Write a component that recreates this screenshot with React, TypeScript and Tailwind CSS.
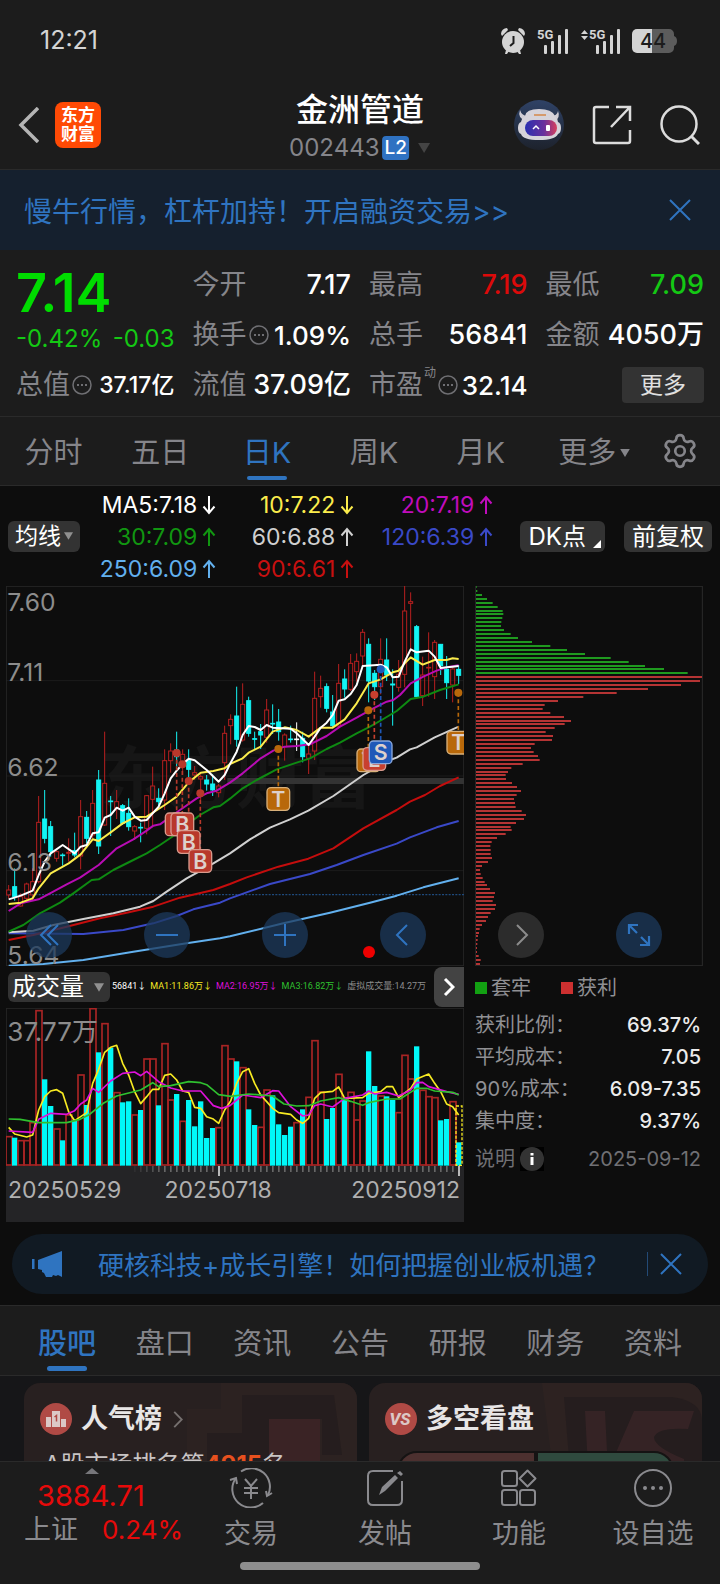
import React, { useState } from 'react';
import { Settings } from 'lucide-react';

type Candle = [string, number, number, number, number];

const STEP = 18;
const FIRST_X = 26;
const COLORS: Record<string, string> = { r: '#b81f1f', c: '#13f4f4', w: '#ffffff' };

// kind, high, body top, body bottom, low
const CANDLES: Candle[] = [
  ['r', 915, 930, 945, 955], ['c', 865, 920, 950, 962], ['r', 940, 950, 978, 980], ['r', 908, 912, 955, 965],
  ['r', 865, 905, 945, 960], ['r', 648, 727, 905, 910], ['c', 630, 717, 775, 790], ['c', 723, 740, 815, 830],
  ['r', 810, 815, 835, 845], ['c', 820, 825, 827, 857], ['r', 775, 817, 820, 845], ['c', 758, 812, 825, 832],
  ['r', 660, 710, 828, 868], ['c', 693, 712, 775, 790], ['r', 630, 670, 765, 775], ['c', 570, 600, 798, 822],
  ['r', 455, 610, 735, 738], ['c', 648, 663, 665, 768], ['r', 630, 665, 685, 717], ['c', 672, 677, 730, 735],
  ['c', 655, 700, 740, 752], ['r', 735, 740, 753, 780], ['c', 728, 742, 744, 787], ['r', 645, 647, 745, 763],
  ['r', 560, 618, 658, 742], ['c', 625, 655, 665, 678], ['r', 508, 542, 660, 690], ['r', 490, 513, 542, 578],
  ['c', 455, 510, 530, 560], ['r', 508, 523, 560, 585], ['c', 508, 542, 568, 610], ['r', 558, 578, 585, 600],
  ['r', 583, 590, 597, 660], ['c', 585, 600, 612, 632], ['c', 583, 612, 630, 648], ['r', 612, 618, 638, 652],
  ['r', 437, 460, 548, 600], ['r', 403, 418, 437, 493], ['c', 320, 408, 478, 500], ['r', 310, 373, 480, 485],
  ['c', 350, 362, 460, 470], ['c', 455, 476, 478, 507], ['c', 432, 455, 465, 507], ['r', 357, 390, 472, 488],
  ['c', 373, 430, 432, 462], ['c', 387, 426, 455, 482], ['r', 460, 465, 500, 542], ['c', 437, 477, 479, 488],
  ['w', 427, 477, 479, 513], ['c', 455, 475, 530, 547], ['r', 493, 522, 535, 582], ['r', 275, 355, 513, 540],
  ['r', 287, 325, 350, 383], ['c', 310, 320, 385, 397], ['c', 345, 396, 437, 442], ['r', 252, 310, 438, 442],
  ['c', 268, 297, 327, 353], ['r', 222, 250, 328, 333], ['r', 220, 244, 275, 305], ['r', 147, 157, 228, 258],
  ['c', 175, 193, 303, 367], ['c', 270, 280, 320, 360], ['r', 175, 238, 320, 343], ['c', 175, 240, 285, 303],
  ['c', 268, 312, 315, 437], ['r', 240, 283, 322, 335], ['r', 18, 93, 283, 322], ['r', 37, 65, 70, 215],
  ['c', 135, 140, 350, 355], ['r', 230, 285, 347, 378], ['r', 157, 262, 264, 350], ['r', 180, 187, 290, 357],
  ['c', 192, 193, 257, 285], ['c', 228, 268, 308, 357], ['r', 262, 267, 315, 367], ['c', 255, 268, 286, 312],
];

const PRICE_LINES = [
  { color: '#62b0ee', points: '26,1157 130,1152 250,1140 400,1115 560,1090 660,1075 690,1069 850,1030 990,998 1110,968 1190,947 1270,922 1376,895' },
  { color: '#3a49c8', points: '26,1060 250,1062 370,1050 460,1030 530,1008 580,988 660,968 690,955 810,912 930,882 1010,855 1090,825 1190,791 1230,772 1310,742 1376,723' },
  { color: '#c40d0d', points: '26,1080 100,1065 200,1040 300,1015 380,998 460,980 540,953 640,930 690,912 740,892 835,860 925,836 1000,805 1090,745 1190,690 1230,665 1275,645 1320,618 1376,592' },
  { color: '#d0d0d0', points: '26,1057 100,1052 160,1035 250,1017 340,1000 420,980 460,963 500,935 560,895 620,862 690,820 750,778 810,743 870,718 925,692 1000,648 1090,585 1170,540 1190,533 1230,508 1250,502 1304,472 1376,440' },
  { color: '#0e8a12', points: '26,1055 70,1035 120,1000 180,968 220,940 275,900 296,898 340,870 400,840 440,820 480,795 520,768 560,735 600,705 640,682 660,678 690,656 728,625 770,600 830,568 890,548 930,535 980,507 1020,488 1070,460 1110,440 1150,417 1190,393 1232,357 1270,350 1320,330 1376,313' },
  { color: '#b80cb4', points: '26,993 62,970 116,958 150,940 200,913 240,893 296,855 350,805 400,778 440,752 460,737 480,733 540,690 590,655 620,640 650,632 690,608 728,580 782,535 820,512 854,500 890,498 930,493 980,468 1020,440 1070,413 1120,385 1160,365 1180,360 1200,345 1232,310 1270,290 1310,272 1340,262 1376,256' },
  { color: '#fbec4c', points: '26,972 62,968 98,955 116,925 152,880 206,850 242,823 278,778 296,783 332,757 368,730 404,712 440,710 494,675 530,650 566,607 602,578 640,573 674,565 690,552 728,535 746,518 782,500 818,455 854,442 890,450 926,470 962,443 998,443 1034,418 1070,370 1106,310 1142,298 1178,277 1196,272 1214,250 1232,232 1268,254 1304,240 1340,240 1358,235 1376,237' },
  { color: '#ffffff', points: '26,958 62,947 98,932 116,885 134,845 152,820 188,795 224,820 242,800 260,795 278,760 296,757 314,713 332,705 350,683 368,692 386,683 404,710 422,722 440,720 476,680 494,640 512,595 530,572 548,552 566,536 584,541 620,570 656,605 674,585 692,548 710,515 728,465 746,438 764,441 782,450 800,435 818,443 872,446 890,460 926,495 944,470 962,443 980,428 998,405 1016,362 1034,358 1052,342 1070,315 1088,258 1142,254 1160,262 1178,292 1196,290 1214,245 1232,208 1250,217 1286,212 1304,230 1322,264 1340,262 1358,260 1376,258' },
];

const PRICE_LABELS = [
  { text: '7.60', y: 94 },
  { text: '7.11', y: 303 },
  { text: '6.62', y: 588 },
  { text: '6.13', y: 872 },
  { text: '5.64', y: 1153 },
];

const MARKERS = [
  { letter: 'B', x: 530, y: 733, dot: 519, fill: '#b8382b', edge: '#d89a8d' },
  { letter: 'B', x: 547, y: 733, dot: 553, fill: '#b8382b', edge: '#d89a8d' },
  { letter: 'B', x: 566, y: 786, dot: 603, fill: '#b8382b', edge: '#d89a8d' },
  { letter: 'B', x: 601, y: 843, dot: 640, fill: '#b8382b', edge: '#d89a8d' },
  { letter: 'T', x: 835, y: 657, dot: 507, fill: '#b8680a', edge: '#d8b07a' },
  { letter: 'T', x: 1105, y: 541, dot: 391, fill: '#b8680a', edge: '#d8b07a' },
  { letter: 'L', x: 1123, y: 537, dot: 344, fill: '#c8402f', edge: '#d89a8d' },
  { letter: 'S', x: 1142, y: 517, dot: 268, fill: '#1f58b8', edge: '#8aa8dc' },
  { letter: 'T', x: 1375, y: 488, dot: 338, fill: '#b8680a', edge: '#d8b07a' },
];

const TRAPPED = [2, 4, 18, 33, 50, 65, 80, 82, 79, 76, 75, 84, 104, 126, 168, 223, 273, 327, 404, 458, 507, 564, 635];
const PROFIT = [
  678, 672, 615, 516, 422, 322, 246, 206, 200, 223, 264, 285, 266, 236, 209, 231, 228, 176, 165, 173, 186, 191, 140, 106, 96,
  89, 90, 108, 123, 135, 122, 114, 117, 119, 137, 150, 144, 120, 104, 107, 89, 63, 47, 43, 44, 44, 48, 36, 18, 12,
  14, 20, 26, 33, 42, 57, 54, 50, 60, 57, 44, 36, 30, 18, 11, 9, 6, 5, 4, 3, 3, 8, 14, 12,
];

const VOLUMES = [
  'r530', 'c533', 'r542', 'r542', 'r488', 'r152', 'c358', 'c438', 'r507', 'c541', 'r465', 'c482', 'r345', 'c435', 'r146', 'c277',
  'r191', 'c263', 'r398', 'c427', 'c424', 'r465', 'c450', 'r297', 'r297', 'c436', 'r251', 'r420', 'c402', 'r484', 'c420', 'c499',
  'c424', 'c534', 'c504', 'r503', 'r257', 'r297', 'c304', 'r323', 'c448', 'c495', 'r502', 'r390', 'c406', 'c493', 'c525', 'c500',
  'r488', 'c448', 'r412', 'r242', 'r396', 'c477', 'c444', 'r343', 'c417', 'r397', 'r480', 'r423', 'c274', 'c378', 'r408', 'c409',
  'c420', 'r458', 'r286', 'r357', 'c259', 'r391', 'r410', 'r413', 'c481', 'c477', 'r425', 'c547',
];

const VOLUME_LINES = [
  { color: '#f7ea22', points: '26,502 44,522 80,531 98,525 116,450 134,410 152,393 170,389 188,400 206,455 224,482 260,458 278,370 296,328 314,277 332,262 350,256 368,310 386,345 404,395 422,431 440,410 458,388 476,388 494,346 512,342 530,360 548,393 566,397 584,442 602,445 620,470 638,476 656,490 674,450 692,423 710,370 728,335 746,326 764,370 782,405 800,425 818,445 836,458 872,463 890,480 908,490 926,475 944,415 962,398 998,394 1016,381 1034,415 1088,413 1106,400 1142,395 1160,380 1178,380 1196,413 1232,385 1250,357 1286,342 1304,370 1322,395 1340,432 1358,440 1376,465' },
  { color: '#de10da', points: '26,513 98,517 116,478 152,460 200,463 224,452 242,432 260,420 278,385 296,397 332,363 368,340 404,336 422,347 440,334 476,365 512,384 548,393 602,393 640,437 665,445 690,437 728,405 782,413 818,392 836,393 872,440 908,468 926,465 944,437 962,432 998,441 1034,415 1088,405 1106,393 1124,402 1160,397 1196,408 1232,390 1250,368 1268,367 1286,380 1340,395 1376,403' },
  { color: '#2fc02f', points: '26,477 60,478 116,488 200,488 240,478 266,465 310,430 350,408 422,390 458,368 476,380 512,377 566,365 602,368 620,374 656,404 692,409 746,402 818,408 852,432 890,438 926,437 962,423 1016,413 1052,424 1088,436 1106,428 1160,417 1200,417 1250,385 1280,385 1304,393 1358,397 1376,405' },
];

const AVERAGES = [
  [{ text: 'MA5:7.18', up: false, color: 'text-white' }, { text: '30:7.09', up: true, color: 'text-[#119611]' }, { text: '250:6.09', up: true, color: 'text-[#62b0ee]' }],
  [{ text: '10:7.22', up: false, color: 'text-[#fbec4c]' }, { text: '60:6.88', up: true, color: 'text-[#d0d0d0]' }, { text: '90:6.61', up: true, color: 'text-[#c81010]' }],
  [{ text: '20:7.19', up: true, color: 'text-[#c00cbc]' }, { text: '120:6.39', up: true, color: 'text-[#3a49c8]' }],
];

const Arrow = ({ up }: { up: boolean }) => (
  <svg viewBox="0 0 14 20" className={`h-5 w-[14px] ${up ? '' : 'rotate-180'}`} fill="none" stroke="currentColor" strokeWidth="2">
    <path d="M7 19V2M1.5 8.5L7 2l5.5 6.5" />
  </svg>
);

const Close = () => (
  <svg viewBox="0 0 22 22" className="h-[22px] w-[22px]" fill="none" stroke="#2f74c0" strokeWidth="2">
    <path d="M1 1l20 20M21 1L1 21" />
  </svg>
);

const Dots = () => (
  <svg viewBox="0 0 20 20" className="h-5 w-5 shrink-0" fill="none" stroke="#6f6f73" strokeWidth="1.5">
    <circle cx="10" cy="10" r="9" />
    <path d="M5 10h2M9 10h2M13 10h2" strokeWidth="2" />
  </svg>
);

const Caret = ({ className }: { className: string }) => (
  <svg viewBox="0 0 12 10" className={className} fill="currentColor">
    <path d="M0 0h12L6 10z" />
  </svg>
);

const Signal = ({ arrows }: { arrows?: boolean }) => (
  <svg viewBox="0 0 40 26" className="h-[26px] w-10 overflow-visible" fill="#d4d4d4">
    {arrows && <path d="M0 6l3.5-4L7 6zM0 8h7l-3.500 4z" />}
    <text x="8" y="11" fontSize="13" fontWeight="700" fontFamily="Roboto, sans-serif">5G</text>
    <rect x="15" y="17" width="3" height="9" rx="1" />
    <rect x="22" y="13" width="3" height="13" rx="1" />
    <rect x="29" y="7" width="3" height="19" rx="1" />
    <rect x="36" y="1" width="3" height="25" rx="1" />
  </svg>
);

const StatusBar = () => (
  <div className="flex h-20 items-center justify-between pl-10 pr-[43px] pt-[2px] text-[#d4d4d4]">
    <span className="text-[25px]">12:21</span>
    <div className="flex items-center">
      <svg viewBox="0 0 24 26" className="mr-1 h-[26px] w-6" fill="#d4d4d4">
        <circle cx="12" cy="14" r="11" />
        <path d="M0 6a6 6 0 0 1 6-6l1 2-6 6zM24 6a6 6 0 0 0-6-6l-1 2 6 6zM5 22l-1 4h2l2-3zM19 22l1 4h-2l-2-3z" />
        <path d="M12.500 8v7l-3.500 3" fill="none" stroke="#1c1c1c" strokeWidth="2" />
      </svg>
      <Signal />
      <div className="w-3" />
      <Signal arrows />
      <svg viewBox="0 0 45 24" className="ml-[11px] h-6 w-[45px]">
        <path d="M5 0h15v24H5a5 5 0 0 1-5-5V5a5 5 0 0 1 5-5z" fill="#d4d4d4" />
        <path d="M20 0h17a5 5 0 0 1 5 5v2q3 1 3 5t-3 5v2a5 5 0 0 1-5 5H20z" fill="#5c5c5c" />
        <text x="21" y="19" fontSize="20" fontWeight="500" textAnchor="middle" fill="#1c1c1c">44</text>
      </svg>
    </div>
  </div>
);

const Header = () => (
  <header className="relative flex h-[90px] items-center justify-between border-b border-[#2a2a2a] pl-[18px] pr-5">
    <div className="flex items-center gap-4">
      <button aria-label="返回">
        <svg viewBox="0 0 21 36" className="h-9 w-[21px]" fill="none" stroke="#b4b4b4" strokeWidth="3.500">
          <path d="M20 1L3 18l17 17" />
        </svg>
      </button>
      <div className="flex h-[46px] w-[46px] flex-col items-center justify-center rounded-lg bg-[#ff4a05] text-[17px] font-bold leading-[19px] text-white">
        <span>东方</span>
        <span>财富</span>
      </div>
    </div>
    <div className="absolute left-1/2 top-3 flex -translate-x-1/2 flex-col items-center">
      <h1 className="text-[32px] font-medium leading-9 text-white">金洲管道</h1>
      <div className="mt-2 flex items-center text-[24px] leading-6 text-[#85858a]">
        <span>002443</span>
        <span className="ml-[3px] rounded bg-[#2f72c2] px-[2px] text-[19px] font-medium text-white">L2</span>
        <Caret className="ml-2 h-[10px] w-[14px] text-[#444]" />
      </div>
    </div>
    <div className="flex items-center gap-7">
      <button aria-label="助手">
        <svg viewBox="0 0 50 50" className="h-[50px] w-[50px]">
          <defs>
            <linearGradient id="disc" x1="0" y1="0" x2="0" y2="1">
              <stop offset="0" stopColor="#2f4266" />
              <stop offset="1" stopColor="#1d222c" />
            </linearGradient>
            <linearGradient id="visor" x1="0" y1="0" x2="1" y2="0">
              <stop offset="0" stopColor="#2a2fb0" />
              <stop offset="0.600" stopColor="#6a2f9c" />
              <stop offset="1" stopColor="#d8405c" />
            </linearGradient>
          </defs>
          <circle cx="25" cy="25" r="25" fill="url(#disc)" />
          <path d="M6 10q-3 8 6 11l4-5q-8 1-10-6zM44 11q3 7-4 11l-5-6q8 1 9-5z" fill="#d0cdd4" />
          <path d="M11 16q1-7 14-7t16 7q3 3 3 6 3 1 3 6t-3 6q-3 6-19 6t-18-6q-3-1-3-6t3-6q1-4 4-6z" fill="#d6d3da" />
          <rect x="11" y="20" width="32" height="16" rx="8" fill="url(#visor)" />
          <path d="M19 29l3-3 3 3" fill="none" stroke="#fff" strokeWidth="1.500" />
          <rect x="32" y="25" width="4" height="6" rx="1" fill="#fff" />
          <path d="M20 15h12" stroke="#d59a6c" strokeWidth="2" />
        </svg>
      </button>
      <button aria-label="分享">
        <svg viewBox="0 0 40 40" className="h-10 w-10" fill="none" stroke="#dcdcdc" strokeWidth="2.500">
          <path d="M17 2H4Q2 2 2 4v32q0 2 2 2h32q2 0 2-2V25M24 2h14v14M38 2L19 22" />
        </svg>
      </button>
      <button aria-label="搜索">
        <svg viewBox="0 0 40 40" className="h-10 w-10" fill="none" stroke="#dcdcdc" strokeWidth="2.500">
          <circle cx="19" cy="19" r="17.500" />
          <path d="M31 31l8 8" strokeWidth="3" />
        </svg>
      </button>
    </div>
  </header>
);

interface QuoteProps {
  label: string;
  value: string;
  color?: string;
  dots?: boolean;
  sup?: string;
}

const Quote = ({ label, value, color = 'text-white', dots, sup }: QuoteProps) => (
  <div className="flex h-[50px] items-center justify-between whitespace-nowrap">
    <span className="relative flex items-center text-[27px] text-[#85858a]">
      {label}
      {sup && <span className="absolute left-[55px] top-0 text-xs">{sup}</span>}
      {dots && <span className={sup ? 'ml-[15px]' : 'ml-[2px]'}><Dots /></span>}
    </span>
    <span className={`font-medium ${dots ? 'text-[26px]' : 'text-[27px]'} ${color}`}>{value}</span>
  </div>
);

const QuotePanel = () => (
  <section className="grid h-[167px] grid-cols-4 gap-x-[18px] border-b border-[#2a2a2a] px-4 pt-[10px]">
    <div>
      <div className="pt-[9px] text-[54px] font-semibold leading-[48px] text-[#00dc00]">7.14</div>
      <div className="flex h-[43px] items-center justify-between whitespace-nowrap text-[24px] leading-6 text-[#14c814]">
        <span>-0.42%</span>
        <span>-0.03</span>
      </div>
      <div className="flex h-[50px] items-center justify-between whitespace-nowrap text-[27px] text-[#85858a]">
        <span className="flex items-center gap-[2px]">总值<Dots /></span>
        <span className="text-[23px] font-medium text-white">37.17亿</span>
      </div>
    </div>
    <div>
      <Quote label="今开" value="7.17" />
      <Quote label="换手" value="1.09%" dots />
      <Quote label="流值" value="37.09亿" />
    </div>
    <div>
      <Quote label="最高" value="7.19" color="text-[#dc0a0a]" />
      <Quote label="总手" value="56841" />
      <Quote label="市盈" value="32.14" dots sup="动" />
    </div>
    <div>
      <Quote label="最低" value="7.09" color="text-[#14c814]" />
      <Quote label="金额" value="4050万" />
      <div className="flex h-[50px] items-center justify-end">
        <button className="h-9 rounded bg-[#333] px-[18px] text-[23px] text-[#e0e0e0]">更多</button>
      </div>
    </div>
  </section>
);

const PERIODS = ['分时', '五日', '日K', '周K', '月K'];

const PeriodTabs = () => {
  const [active, setActive] = useState('日K');
  return (
    <nav className="grid h-[69px] grid-cols-[107fr_107fr_107fr_107fr_107fr_120fr_52fr] border-b border-[#2a2a2a] pr-[14px] text-[29px] text-[#85858a]">
      {PERIODS.map((period) => (
        <button
          key={period}
          onClick={() => setActive(period)}
          className={`relative flex items-center justify-center pt-1 ${active === period ? 'text-[#2f74c0]' : ''}`}
        >
          {period}
          {active === period && <span className="absolute bottom-[5px] left-1/2 h-1 w-10 -translate-x-1/2 rounded-full bg-[#2f74c0]" />}
        </button>
      ))}
      <button className="flex items-center justify-center gap-1 pt-1">
        更多
        <Caret className="h-2 w-[10px]" />
      </button>
      <button className="flex items-center justify-center" aria-label="设置">
        <Settings size={38} strokeWidth={1.7} />
      </button>
    </nav>
  );
};

const AverageLegend = () => (
  <section className="flex h-[100px] items-center justify-between px-2 text-[23px]">
    <button className="flex h-[31px] items-center gap-[3px] rounded-md bg-[#333] px-[7px] text-white">
      均线
      <Caret className="h-2 w-[9px] text-[#909090]" />
    </button>
    <div className="grid h-24 grid-cols-[116px_112px_113px] gap-x-[26px] pr-[6px] pt-px">
      {AVERAGES.map((column, i) => (
        <div key={i} className="flex flex-col items-end">
          {column.map((item) => (
            <div key={item.text} className={`flex h-8 items-center gap-[5px] whitespace-nowrap ${item.color}`}>
              {item.text}
              <Arrow up={item.up} />
            </div>
          ))}
        </div>
      ))}
    </div>
    <div className="flex gap-[19px] text-[24px] leading-[31px] text-white">
      <button className="relative h-[31px] rounded-md bg-[#333] pl-[9px] pr-[19px]">
        DK点
        <svg viewBox="0 0 8 8" className="absolute bottom-1 right-1 h-2 w-2" fill="#fff"><path d="M8 0v8H0z" /></svg>
      </button>
      <button className="h-[31px] rounded-md bg-[#333] px-2">前复权</button>
    </div>
  </section>
);

const CandleChart = () => (
  <svg viewBox="18 18 1374 1140" className="h-auto w-full" fill="none">
    <text x="300" y="668" fontSize="204" fontWeight="700" fill="#161616">东方财富</text>
    <path d="M18 302H1392M18 588H1392M18 872H1392" stroke="#1c1c1c" strokeWidth="3" />
    <rect x="19" y="19" width="1372" height="1138" stroke="#262626" strokeWidth="3" />
    <rect x="682" y="594" width="710" height="18" fill="#333" />
    <path d="M26 944H1392" stroke="#1f4a7c" strokeWidth="4" strokeDasharray="6 4" />
    {CANDLES.map(([kind, high, top, bottom, low], i) => {
      const x = FIRST_X + i * STEP;
      const color = COLORS[kind];
      const hollow = kind === 'r';
      return (
        <g key={i} stroke={color} strokeWidth="3">
          <path d={hollow ? `M${x} ${high}V${top}M${x} ${bottom}V${low}` : `M${x} ${high}V${low}`} />
          <rect x={x - 6} y={top} width="12" height={bottom - top} fill={hollow ? 'none' : color} />
        </g>
      );
    })}
    {PRICE_LINES.map((line) => (
      <polyline key={line.color} points={line.points} stroke={line.color} strokeWidth="6" strokeLinejoin="round" />
    ))}
    {MARKERS.map((m, i) => (
      <g key={i}>
        <path d={`M${m.x} ${m.dot}V${m.y}`} stroke={m.fill} strokeWidth="5" strokeDasharray="12 8" />
        <circle cx={m.x} cy={m.dot} r="12" fill={m.fill} />
      </g>
    ))}
    {MARKERS.map((m, i) => (
      <g key={i}>
        <rect x={m.x - 34} y={m.y - 34} width="68" height="68" rx="12" fill={m.fill} stroke={m.edge} strokeWidth="4" />
        <text x={m.x} y={m.y + 23} fontSize="64" fontWeight="600" textAnchor="middle" fill="#ddd0cc">{m.letter}</text>
      </g>
    ))}
    <circle cx="1107" cy="1116" r="18" fill="#ee0000" />
    {PRICE_LABELS.map((label) => (
      <text key={label.text} x="22" y={label.y} fontSize="74" fill="#8c8c8c">{label.text}</text>
    ))}
  </svg>
);

const CostChart = () => (
  <svg viewBox="0 0 684 1140" className="h-auto w-full">
    <rect x="1" y="1" width="681" height="1138" fill="none" stroke="#2a2a2a" strokeWidth="3" />
    {[...TRAPPED, ...PROFIT].map((width, i) => (
      <rect key={i} x="3" y={Math.round((i * 11.78) / 3) * 3} width={width} height="6" fill={i < TRAPPED.length ? '#1f9a1f' : '#b53434'} />
    ))}
  </svg>
);

const round = 'flex h-[46px] w-[46px] items-center justify-center rounded-full bg-[#1c3a5c]/75';

const ChartControls = () => (
  <div className="absolute bottom-2 left-[26px] right-[58px] flex justify-between">
    <button className={round} aria-label="最早">
      <svg viewBox="0 0 24 24" className="h-6 w-6" fill="none" stroke="#2f74c0" strokeWidth="2"><path d="M14 2L4 12l10 10M21 2L11 12l10 10" /></svg>
    </button>
    <button className={round} aria-label="缩小">
      <svg viewBox="0 0 24 24" className="h-6 w-6" fill="none" stroke="#2f74c0" strokeWidth="2"><path d="M1 12h22" /></svg>
    </button>
    <button className={round} aria-label="放大">
      <svg viewBox="0 0 24 24" className="h-6 w-6" fill="none" stroke="#2f74c0" strokeWidth="2"><path d="M1 12h22M12 1v22" /></svg>
    </button>
    <button className={round} aria-label="向左">
      <svg viewBox="0 0 24 24" className="h-6 w-6" fill="none" stroke="#2f74c0" strokeWidth="2"><path d="M16 2L6 12l10 10" /></svg>
    </button>
    <button className="flex h-[46px] w-[46px] items-center justify-center rounded-full bg-[#2c2c2c]" aria-label="向右">
      <svg viewBox="0 0 24 24" className="h-6 w-6" fill="none" stroke="#8c8c8c" strokeWidth="2"><path d="M8 2l10 10L8 22" /></svg>
    </button>
    <button className={round} aria-label="全屏">
      <svg viewBox="0 0 24 24" className="h-6 w-6" fill="none" stroke="#2f74c0" strokeWidth="2.200"><path d="M2 11V2h9M2 2l8 8M22 13v9h-9M22 22l-8-8" /></svg>
    </button>
  </div>
);

const VolumeChart = () => (
  <svg viewBox="18 144 1374 474" className="h-auto w-full" fill="none">
    <rect x="19" y="145" width="1372" height="475" stroke="#262626" strokeWidth="3" />
    {VOLUMES.map((item, i) => {
      const x = FIRST_X + i * STEP;
      const top = Number(item.slice(1));
      return item[0] === 'r' ? (
        <rect key={i} x={x - 8} y={top} width="18" height={615 - top} stroke="#a82424" strokeWidth="5" />
      ) : (
        <rect key={i} x={x - 8} y={top} width="16" height={617 - top} fill="#00f8f8" />
      );
    })}
    <rect x="1368" y="438" width="18" height="178" stroke="#f7ea22" strokeWidth="4" strokeDasharray="9 5" />
    {VOLUME_LINES.map((line) => (
      <polyline key={line.color} points={line.points} stroke={line.color} strokeWidth="5" strokeLinejoin="round" />
    ))}
    <text x="22" y="244" fontSize="78" fill="#8c8c8c">37.77万</text>
  </svg>
);

const VolumePanel = () => (
  <div className="min-w-0">
    <div className="flex h-[42px] items-center justify-between">
      <div className="flex min-w-0 items-center whitespace-nowrap">
        <button className="ml-[2px] flex h-[30px] items-center gap-[10px] rounded-md bg-[#333] pl-1 pr-[6px] text-[24px] text-white">
          成交量
          <Caret className="h-[9px] w-[10px] text-[#909090]" />
        </button>
        <div className="ml-[2px] flex gap-1 text-[9px] [font-family:Roboto,'Noto_Sans_CJK_SC',sans-serif]">
          <span className="text-white">56841↓</span>
          <span className="text-[#f7ea22]">MA1:11.86万↓</span>
          <span className="text-[#de10da]">MA2:16.95万↓</span>
          <span className="text-[#2fc02f]">MA3:16.82万↓</span>
          <span className="text-[#8c8c8c]">虚拟成交量:14.27万</span>
        </div>
      </div>
      <button className="flex h-10 w-[30px] shrink-0 items-center justify-center rounded-l-lg bg-[#434343]" aria-label="更多指标">
        <svg viewBox="0 0 12 20" className="h-5 w-3" fill="none" stroke="#fff" strokeWidth="3"><path d="M2 2l8 8-8 8" /></svg>
      </button>
    </div>
    <VolumeChart />
    <div className="h-14 bg-[#242426]">
      <svg viewBox="18 0 1374 30" className="h-auto w-full">
        {Array.from({ length: 55 }, (_, i) => {
          const n = i + 21;
          const major = n === 35 || n === 75;
          return <rect key={n} x={FIRST_X + n * STEP - 2} y="0" width={major ? 6 : 5} height={major ? 30 : 18} fill={major ? '#b8b8b8' : '#666'} opacity={Math.min(1, (i + 1) / 6)} />;
        })}
      </svg>
      <div className="grid grid-cols-[154fr_118fr_186fr] pl-[2px] pr-1 text-[23px] leading-7 text-[#b0b0b0]">
        <span>20250529</span>
        <span className="text-center">20250718</span>
        <span className="text-right">20250912</span>
      </div>
    </div>
  </div>
);

const STATS = [
  ['获利比例：', '69.37%'],
  ['平均成本：', '7.05'],
  ['90%成本：', '6.09-7.35'],
  ['集中度：', '9.37%'],
];

const CostStats = () => (
  <div className="min-w-0 text-[20px] text-[#909094]">
    <div className="flex h-[43px] items-center gap-1">
      <span className="h-3 w-3 bg-[#12a012]" />
      <span>套牢</span>
      <span className="ml-[26px] h-3 w-3 bg-[#cc3030]" />
      <span>获利</span>
    </div>
    {STATS.map(([label, value]) => (
      <div key={label} className="flex h-8 items-center justify-between whitespace-nowrap pr-[2px]">
        <span>{label}</span>
        <span className="font-medium text-[#ececec]">{value}</span>
      </div>
    ))}
    <div className="mt-[6px] flex h-8 items-center justify-between pr-[2px] text-[#707074]">
      <span className="flex items-center gap-[5px]">
        说明
        <svg viewBox="0 0 24 24" className="h-6 w-6">
          <rect width="24" height="24" fill="#000" />
          <circle cx="12" cy="12" r="12" fill="#333" />
          <path d="M12 10v8M12 6v2.500" stroke="#fff" strokeWidth="3" />
        </svg>
      </span>
      <span>2025-09-12</span>
    </div>
  </div>
);

const SECTIONS = ['股吧', '盘口', '资讯', '公告', '研报', '财务', '资料'];

const SectionTabs = () => {
  const [active, setActive] = useState('股吧');
  return (
    <nav className="mt-[11px] flex h-[71px] items-center justify-between border-y border-[#2a2a2a] bg-[#1c1c1c] px-[38px] text-[29px] text-[#85858a]">
      {SECTIONS.map((name) => (
        <button
          key={name}
          onClick={() => setActive(name)}
          className={`relative flex h-full items-center pt-[6px] ${active === name ? 'font-medium text-[#2f74c0]' : ''}`}
        >
          {name}
          {active === name && <span className="absolute bottom-1 left-1/2 h-[5px] w-10 -translate-x-1/2 rounded-full bg-[#2f74c0]" />}
        </button>
      ))}
    </nav>
  );
};

const Cards = () => (
  <div className="grid grid-cols-2 gap-3 bg-[#161618] pl-6 pr-[18px] pt-[7px]">
    <div className="relative h-40 overflow-hidden rounded-2xl bg-[#282020] px-4 pt-[18px]">
      <svg viewBox="0 0 170 160" className="absolute right-0 top-0 h-40 w-[170px]">
        <path d="M34 0h136v160H0V26h34z" fill="#2c2221" />
        <path d="M55 12h92l8 60h-20V36H83v124H20V50h35z" fill="#251d1e" />
        <path d="M82 36h51v124H82z" fill="#3a2325" />
      </svg>
      <div className="relative flex h-9 items-center">
        <svg viewBox="0 0 32 32" className="h-8 w-8">
          <circle cx="16" cy="16" r="16" fill="#b04a45" />
          <path d="M6 14h5v10H6zM12 8h8v16h-8zM21 16h5v8h-5z" fill="#dcc8c6" />
          <path d="M14.500 14l2-1.500v6" fill="none" stroke="#b04a45" strokeWidth="1.500" />
        </svg>
        <h2 className="ml-[9px] text-[27px] font-bold text-[#e8e6e6]">人气榜</h2>
        <svg viewBox="0 0 10 18" className="ml-[11px] h-[17px] w-[10px]" fill="none" stroke="#76706f" strokeWidth="2"><path d="M1 1l8 8-8 8" /></svg>
      </div>
      <p className="relative mt-[14px] whitespace-nowrap pl-1 text-[24px] leading-7 text-[#c8c4c4]">
        A股市场排名第<b className="text-[#e8501e]">4915</b>名
      </p>
    </div>
    <div className="relative h-40 overflow-hidden rounded-2xl bg-[#282020] px-4 pt-[18px]">
      <svg viewBox="0 0 160 160" className="absolute right-0 top-0 h-40 w-40">
        <path d="M0 0h160v160H20z" fill="#2d2221" />
        <path d="M22 14h108q30 4 30 24v122H34z" fill="#251d1e" />
        <path d="M43 28h20l3 60 26-60h60l-6 18q-30-2-34 8 0 10 30 22v84H50z" fill="#352325" />
      </svg>
      <div className="relative flex h-9 items-center">
        <svg viewBox="0 0 32 32" className="h-8 w-8">
          <circle cx="16" cy="16" r="16" fill="#b04a45" />
          <text x="15" y="22" fontSize="17" fontWeight="800" fontStyle="italic" textAnchor="middle" fill="#dcc8c6" fontFamily="Roboto, sans-serif">VS</text>
        </svg>
        <h2 className="ml-[9px] text-[27px] font-bold text-[#e8e6e6]">多空看盘</h2>
      </div>
      <div className="relative mx-3 mt-[14px] flex h-10 gap-1 overflow-hidden rounded-full border-2 border-[#151313] bg-[#151313]">
        <div className="flex-1 bg-[#4c302f]" />
        <div className="flex-1 bg-[#2f4a3e]" />
      </div>
    </div>
  </div>
);

const stroke = { fill: 'none', stroke: '#8a8a8e', strokeWidth: 2 };

const ACTIONS = [
  {
    name: '交易',
    icon: (
      <svg viewBox="0 0 44 40" className="h-10 w-11" {...stroke}>
        <path d="M12 3.500A18.500 18.500 0 0 1 39 27M34 35A18.500 18.500 0 0 1 7 10" />
        <path d="M1 12l6-2 1 6M43 25l-5 3-1-5" />
        <path d="M16 11l6 7 6-7M22 18v13M15 20h14M15 25h14" />
      </svg>
    ),
  },
  {
    name: '发帖',
    icon: (
      <svg viewBox="0 0 40 40" className="h-10 w-10" {...stroke}>
        <path d="M28 3H8Q3 3 3 8v24q0 5 5 5h24q5 0 5-5V13" />
        <path d="M14 27l3-8L30 7l3 3-13 13zM32 5l3-2 3 3-2 2z" fill="#8a8a8e" stroke="none" />
      </svg>
    ),
  },
  {
    name: '功能',
    icon: (
      <svg viewBox="0 0 40 40" className="h-10 w-10" {...stroke}>
        <rect x="3" y="3" width="15" height="15" rx="2.500" />
        <rect x="3" y="22" width="15" height="15" rx="2.500" />
        <rect x="21" y="22" width="15" height="15" rx="2.500" />
        <path d="M28.500 2.500l8 8-8 8-8-8z" strokeLinejoin="round" />
      </svg>
    ),
  },
  {
    name: '设自选',
    icon: (
      <svg viewBox="0 0 40 40" className="h-10 w-10" {...stroke}>
        <circle cx="20" cy="20" r="18" />
        <path d="M12 20h.01M20 20h.01M28 20h.01" strokeWidth="4" strokeLinecap="round" />
      </svg>
    ),
  },
];

const Footer = () => (
  <footer className="relative border-t border-[#2a2a2a] bg-[#1c1c1c] pb-[14px]">
    <div className="flex h-[100px]">
      <button className="relative flex w-[184px] flex-col pl-6 pt-[17px] text-left">
        <svg viewBox="0 0 14 6" className="absolute left-[85px] top-[6px] h-[6px] w-[14px]" fill="#76767a"><path d="M0 6l7-6 7 6z" /></svg>
        <span className="pl-[13px] text-[29px] leading-[34px] text-[#e60a0a]">3884.71</span>
        <span className="flex items-center gap-6 text-[27px] leading-[34px] text-[#8a8a8e]">
          上证
          <span className="text-[26px] text-[#e60a0a]">0.24%</span>
        </span>
      </button>
      <div className="grid flex-1 grid-cols-4">
        {ACTIONS.map((action) => (
          <button key={action.name} className="flex flex-col items-center pt-[6px] text-[27px] text-[#8a8a8e]">
            {action.icon}
            <span className="mt-2 leading-9">{action.name}</span>
          </button>
        ))}
      </div>
    </div>
    <div className="mx-auto h-2 w-1/3 rounded-full bg-[#8e8e8e]" />
  </footer>
);

export default function App() {
  return (
    <div className="flex h-screen flex-col overflow-hidden bg-[#0d0d0d] [font-family:Inter,'Noto_Sans_CJK_SC',sans-serif]">
      <main className="min-h-0 flex-1 overflow-hidden">
        <div className="bg-[#1c1c1c]">
          <StatusBar />
          <Header />
          <div className="flex h-20 items-center justify-between bg-[#15202e] pl-6 pr-[29px]">
            <a href="#margin" className="pt-[3px] text-[28px] text-[#2f74c0]">慢牛行情，杠杆加持！开启融资交易&gt;&gt;</a>
            <button aria-label="关闭"><Close /></button>
          </div>
          <QuotePanel />
          <PeriodTabs />
        </div>
        <AverageLegend />
        <div className="relative grid grid-cols-[458fr_228fr] gap-[11px] pl-[6px] pr-[17px]">
          <CandleChart />
          <CostChart />
          <ChartControls />
        </div>
        <div className="grid grid-cols-[458fr_228fr] gap-[11px] pl-[6px] pr-[17px]">
          <VolumePanel />
          <CostStats />
        </div>
        <div className="mx-3 mt-3 flex h-[60px] items-center rounded-full bg-[#111a23] pl-5 pr-[26px]">
          <svg viewBox="0 0 30 26" className="h-[26px] w-[30px]" fill="#2f74c0">
            <path d="M0 8h2.500v10H0zM6 9L30 0v26l-4-2-2 1-3-1-1 2h-6l-2-4-2-1V19l-4-1z" />
          </svg>
          <a href="#news" className="ml-9 flex-1 pt-[2px] text-[26px] text-[#2f74c0]">硬核科技+成长引擎！如何把握创业板机遇？</a>
          <span className="mr-3 h-6 w-px bg-[#234a76]" />
          <button aria-label="关闭"><Close /></button>
        </div>
        <SectionTabs />
        <Cards />
      </main>
      <Footer />
    </div>
  );
}
